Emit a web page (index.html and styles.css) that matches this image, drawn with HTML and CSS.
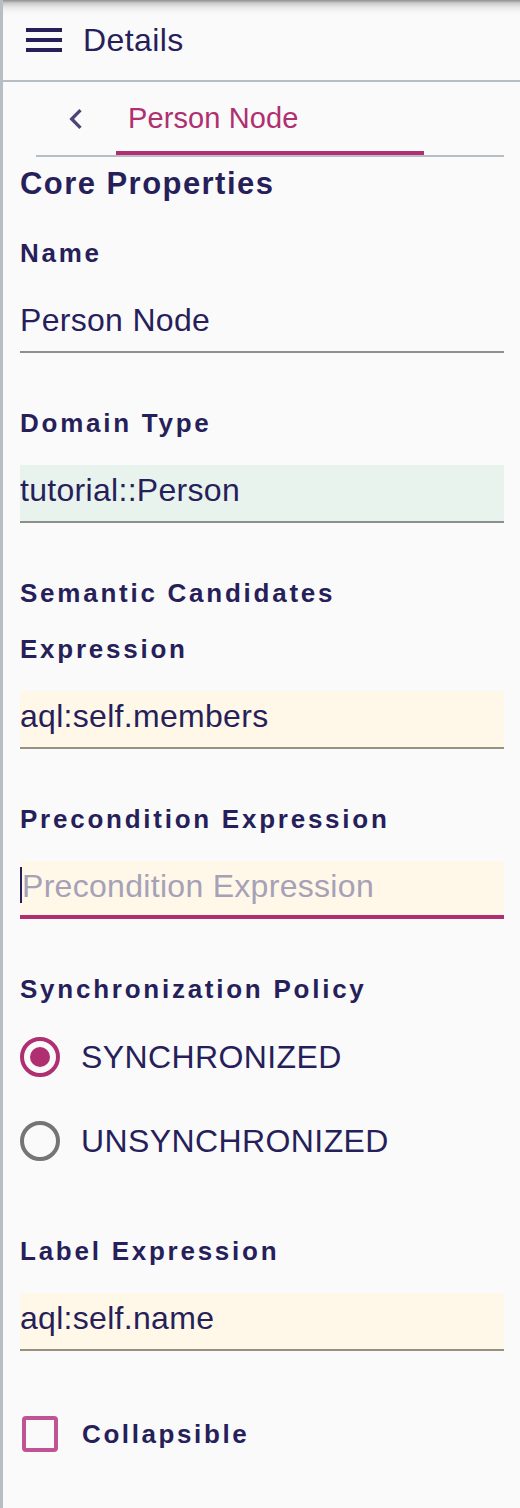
FILE: index.html
```html
<!DOCTYPE html>
<html lang="en">
<head>
<meta charset="utf-8">
<title>Details</title>
<link rel="stylesheet" href="styles.css">
</head>
<body>
<div class="panel">
  <header class="titlebar">
    <span class="menu" aria-label="menu"><span></span><span></span><span></span></span>
    <h1 class="title">Details</h1>
  </header>
  <nav class="tabs">
    <button class="tab-scroll" aria-label="previous">
      <svg viewBox="0 0 24 24" width="40" height="40"><path d="M15.41 7.41L14 6l-6 6 6 6 1.41-1.41L10.83 12z" fill="currentColor"/></svg>
    </button>
    <div class="tab active">Person Node</div>
  </nav>
  <section class="content">
    <h2 class="section-title">Core Properties</h2>

    <div class="group">
      <label class="label">Name</label>
      <div class="field plain">Person Node</div>
    </div>

    <div class="group">
      <label class="label">Domain Type</label>
      <div class="field green">tutorial::Person</div>
    </div>

    <div class="group">
      <label class="label">Semantic Candidates Expression</label>
      <div class="field yellow">aql:self.members</div>
    </div>

    <div class="group">
      <label class="label">Precondition Expression</label>
      <div class="field yellow focused"><span class="caret"></span><span class="placeholder">Precondition Expression</span></div>
    </div>

    <div class="group radios">
      <label class="label">Synchronization Policy</label>
      <div class="radio-row">
        <span class="radio checked"><span class="dot"></span></span>
        <span class="radio-text">SYNCHRONIZED</span>
      </div>
      <div class="radio-row">
        <span class="radio"></span>
        <span class="radio-text">UNSYNCHRONIZED</span>
      </div>
    </div>

    <div class="group">
      <label class="label">Label Expression</label>
      <div class="field yellow">aql:self.name</div>
    </div>

    <div class="check-row">
      <span class="checkbox"></span>
      <span class="check-text">Collapsible</span>
    </div>
  </section>
</div>
</body>
</html>
```

FILE: styles.css
```css
* { box-sizing: border-box; }

html, body {
  margin: 0;
  padding: 0;
  background: #fafafa;
}

body {
  font-family: "Liberation Sans", Arial, sans-serif;
  color: #271f5a;
}

.panel {
  min-height: 100vh;
  border-left: 3px solid #b6bec4;
  background: #fafafa;
}

.titlebar {
  height: 82px;
  display: flex;
  align-items: center;
  gap: 21px;
  padding-left: 23px;
  border-bottom: 2px solid #b6bec4;
  background: linear-gradient(to bottom, #8f8f8f 0px, #c9c9c9 3px, #e6e6e6 7px, #f4f4f4 11px, #fafafa 16px);
}

.menu {
  display: flex;
  flex-direction: column;
  gap: 6px;
  width: 36px;
}

.menu span {
  display: block;
  height: 4px;
  width: 36px;
  background: #271f5a;
}

.title {
  margin: 0;
  font-size: 32px;
  font-weight: normal;
  line-height: 36px;
  letter-spacing: 0.4px;
  color: #271f5a;
}

.tabs {
  display: flex;
  height: 75px;
  margin: 0 16px 0 33px;
  border-bottom: 2px solid #b6bec4;
}

.tab-scroll {
  width: 80px;
  border: 0;
  padding: 0;
  background: none;
  display: flex;
  align-items: center;
  justify-content: center;
  color: #4c4479;
  padding-top: 1px;
}

.tab-scroll svg { display: block; }

.tab {
  width: 308px;
  border-bottom: 4px solid #b02f70;
  display: flex;
  align-items: center;
  padding: 2px 0 0 12px;
  font-size: 29px;
  letter-spacing: 0.1px;
  color: #b02f70;
  line-height: 34px;
}

.content {
  display: flex;
  flex-direction: column;
  padding: 0 16px 0 17px;
}

.section-title {
  margin: 9px 0 23px;
  font-size: 31px;
  line-height: 36px;
  font-weight: bold;
  letter-spacing: 1.45px;
}

.group {
  display: flex;
  flex-direction: column;
  margin-bottom: 42px;
}

.label {
  display: block;
  max-width: 440px;
  font-size: 26px;
  font-weight: bold;
  letter-spacing: 2.75px;
  line-height: 56px;
  margin-bottom: 14px;
}

.field {
  height: 58px;
  padding-top: 7px;
  font-size: 32px;
  line-height: 36px;
  letter-spacing: 0.3px;
  border-bottom: 2px solid #8f8f8f;
  white-space: nowrap;
}

.field.green {
  background: #e9f3ed;
  border-bottom-color: #8b908c;
}

.field.yellow {
  background: #fff8e8;
  border-bottom-color: #97927f;
}

.field.focused {
  border-bottom: 4px solid #b02f70;
  display: flex;
  align-items: flex-start;
  padding-top: 6px;
}

.caret {
  display: block;
  width: 2px;
  height: 36px;
  background: #271f5a;
  flex: none;
}

.placeholder {
  color: #a6a1b6;
  line-height: 38px;
}

.radios {
  margin-bottom: 40px;
}

.radios .label {
  margin-bottom: -2px;
}

.radio-row {
  height: 84px;
  display: flex;
  align-items: center;
  gap: 21px;
}

.radio {
  width: 40px;
  height: 40px;
  border-radius: 50%;
  border: 4px solid #757575;
  display: flex;
  align-items: center;
  justify-content: center;
  flex: none;
}

.radio.checked {
  border-color: #b02f70;
}

.radio .dot {
  width: 20px;
  height: 20px;
  border-radius: 50%;
  background: #b02f70;
}

.radio-text {
  font-size: 32px;
  line-height: 36px;
  letter-spacing: 0.4px;
}

.check-row {
  height: 76px;
  margin-top: 3px;
  display: flex;
  align-items: center;
  gap: 24px;
  padding-left: 2px;
}

.checkbox {
  width: 36px;
  height: 36px;
  border: 4px solid #bf5394;
  border-radius: 4px;
  flex: none;
}

.check-text {
  font-size: 26px;
  font-weight: bold;
  letter-spacing: 2.6px;
  line-height: 30px;
}
```
